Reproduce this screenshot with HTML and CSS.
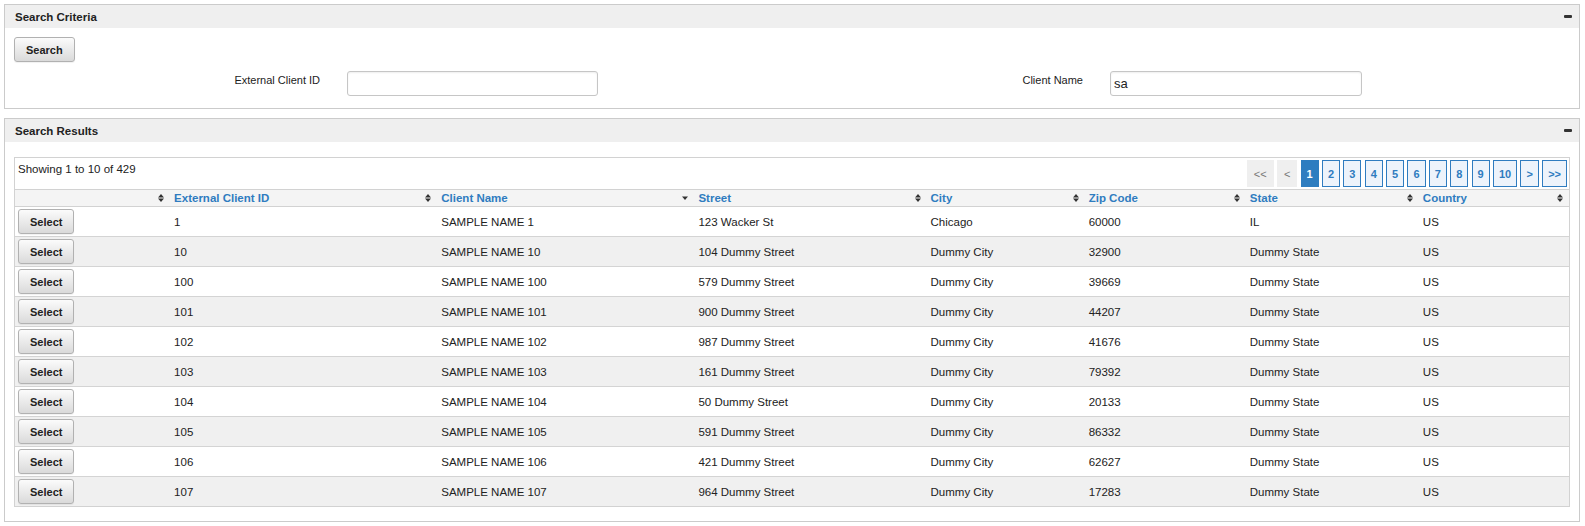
FILE: index.html
```html
<!DOCTYPE html>
<html lang="en">
<head>
<meta charset="utf-8">
<title>Client Search</title>
<link rel="stylesheet" href="styles.css">
</head>
<body>
<section class="panel">
  <header class="panel-head"><span class="panel-title">Search Criteria</span><span class="collapse"></span></header>
  <div class="criteria-body">
    <button class="btn">Search</button>
    <div class="fields">
      <label class="field-label">External Client ID</label>
      <input class="field-input" type="text" value="">
      <label class="field-label">Client Name</label>
      <input class="field-input" type="text" value="sa">
    </div>
  </div>
</section>

<section class="panel panel-results">
  <header class="panel-head"><span class="panel-title">Search Results</span><span class="collapse"></span></header>
  <div class="results-body">
    <div class="grid-box">
      <div class="toolbar">
        <span class="info">Showing 1 to 10 of 429</span>
        <nav class="pager">
          <span class="pg off">&lt;&lt;</span>
          <span class="pg off">&lt;</span>
          <span class="pg on">1</span>
          <span class="pg">2</span>
          <span class="pg">3</span>
          <span class="pg">4</span>
          <span class="pg">5</span>
          <span class="pg">6</span>
          <span class="pg">7</span>
          <span class="pg">8</span>
          <span class="pg">9</span>
          <span class="pg">10</span>
          <span class="pg">&gt;</span>
          <span class="pg">&gt;&gt;</span>
        </nav>
      </div>
      <table class="grid">
        <colgroup>
          <col class="c0"><col class="c1"><col class="c2"><col class="c3"><col class="c4"><col class="c5"><col class="c6"><col class="c7">
        </colgroup>
        <thead>
          <tr>
            <th><span class="th-in"><span></span><svg class="sort" width="6" height="8" viewBox="0 0 6 8"><path d="M0 3.4L3 0L6 3.4Z M0 4.6L3 8L6 4.6Z"/></svg></span></th>
            <th><span class="th-in"><span>External Client ID</span><svg class="sort" width="6" height="8" viewBox="0 0 6 8"><path d="M0 3.4L3 0L6 3.4Z M0 4.6L3 8L6 4.6Z"/></svg></span></th>
            <th><span class="th-in"><span>Client Name</span><svg class="sort" width="6" height="8" viewBox="0 0 6 8"><path d="M0 2.5L3 6L6 2.5Z"/></svg></span></th>
            <th><span class="th-in"><span>Street</span><svg class="sort" width="6" height="8" viewBox="0 0 6 8"><path d="M0 3.4L3 0L6 3.4Z M0 4.6L3 8L6 4.6Z"/></svg></span></th>
            <th><span class="th-in"><span>City</span><svg class="sort" width="6" height="8" viewBox="0 0 6 8"><path d="M0 3.4L3 0L6 3.4Z M0 4.6L3 8L6 4.6Z"/></svg></span></th>
            <th><span class="th-in"><span>Zip Code</span><svg class="sort" width="6" height="8" viewBox="0 0 6 8"><path d="M0 3.4L3 0L6 3.4Z M0 4.6L3 8L6 4.6Z"/></svg></span></th>
            <th><span class="th-in"><span>State</span><svg class="sort" width="6" height="8" viewBox="0 0 6 8"><path d="M0 3.4L3 0L6 3.4Z M0 4.6L3 8L6 4.6Z"/></svg></span></th>
            <th><span class="th-in"><span>Country</span><svg class="sort" width="6" height="8" viewBox="0 0 6 8"><path d="M0 3.4L3 0L6 3.4Z M0 4.6L3 8L6 4.6Z"/></svg></span></th>
          </tr>
        </thead>
        <tbody>
          <tr><td><button class="btn">Select</button></td><td>1</td><td>SAMPLE NAME 1</td><td>123 Wacker St</td><td>Chicago</td><td>60000</td><td>IL</td><td>US</td></tr>
          <tr><td><button class="btn">Select</button></td><td>10</td><td>SAMPLE NAME 10</td><td>104 Dummy Street</td><td>Dummy City</td><td>32900</td><td>Dummy State</td><td>US</td></tr>
          <tr><td><button class="btn">Select</button></td><td>100</td><td>SAMPLE NAME 100</td><td>579 Dummy Street</td><td>Dummy City</td><td>39669</td><td>Dummy State</td><td>US</td></tr>
          <tr><td><button class="btn">Select</button></td><td>101</td><td>SAMPLE NAME 101</td><td>900 Dummy Street</td><td>Dummy City</td><td>44207</td><td>Dummy State</td><td>US</td></tr>
          <tr><td><button class="btn">Select</button></td><td>102</td><td>SAMPLE NAME 102</td><td>987 Dummy Street</td><td>Dummy City</td><td>41676</td><td>Dummy State</td><td>US</td></tr>
          <tr><td><button class="btn">Select</button></td><td>103</td><td>SAMPLE NAME 103</td><td>161 Dummy Street</td><td>Dummy City</td><td>79392</td><td>Dummy State</td><td>US</td></tr>
          <tr><td><button class="btn">Select</button></td><td>104</td><td>SAMPLE NAME 104</td><td>50 Dummy Street</td><td>Dummy City</td><td>20133</td><td>Dummy State</td><td>US</td></tr>
          <tr><td><button class="btn">Select</button></td><td>105</td><td>SAMPLE NAME 105</td><td>591 Dummy Street</td><td>Dummy City</td><td>86332</td><td>Dummy State</td><td>US</td></tr>
          <tr><td><button class="btn">Select</button></td><td>106</td><td>SAMPLE NAME 106</td><td>421 Dummy Street</td><td>Dummy City</td><td>62627</td><td>Dummy State</td><td>US</td></tr>
          <tr><td><button class="btn">Select</button></td><td>107</td><td>SAMPLE NAME 107</td><td>964 Dummy Street</td><td>Dummy City</td><td>17283</td><td>Dummy State</td><td>US</td></tr>
        </tbody>
      </table>
    </div>
  </div>
</section>
</body>
</html>
```

FILE: styles.css
```css
* { box-sizing: border-box; }

body {
  margin: 4px 5px 0 4px;
  font-family: "Liberation Sans", Arial, sans-serif;
  font-size: 11.5px;
  color: #222;
  background: #fff;
}

.panel {
  border: 1px solid #cbcbcb;
  background: #fff;
}
.panel-results { margin-top: 9px; }

.panel-head {
  height: 23px;
  background: #efefef;
  display: flex;
  align-items: center;
  justify-content: space-between;
  padding: 0 7px 0 10px;
}
.panel-title {
  font-weight: bold;
  font-size: 11.5px;
  color: #222;
}
.collapse {
  width: 8px;
  height: 3px;
  background: #333;
  border-radius: 1px;
}

.btn {
  display: block;
  height: 25px;
  padding: 0 11px;
  border: 1px solid #b1b1b1;
  border-radius: 3px;
  background: linear-gradient(#fbfbfb, #dadada);
  box-shadow: 0 1px 1px rgba(0,0,0,0.06);
  font: bold 11px "Liberation Sans", Arial, sans-serif;
  color: #222;
  cursor: pointer;
}

.criteria-body { padding: 9px 9px 12px; }

.fields {
  display: grid;
  grid-template-columns: 333px 251px 512px 252px;
  margin-top: 9px;
}
.field-label {
  text-align: right;
  padding: 3px 27px 0 0;
  font-size: 11px;
  line-height: 13px;
  color: #222;
}
.field-input {
  height: 25px;
  border: 1px solid #c6c6c6;
  border-radius: 3px;
  padding: 0 3px;
  font: 13px "Liberation Sans", Arial, sans-serif;
  color: #222;
  background: #fff;
  box-shadow: inset 0 1px 2px rgba(0,0,0,0.07);
  outline: none;
}

.results-body { padding: 15px 9px 14px; }

.grid-box { border: 1px solid #d2d2d2; }

.toolbar {
  display: flex;
  justify-content: space-between;
  align-items: flex-start;
  height: 31px;
  padding: 2px 2px 2px 3px;
}
.info {
  padding-top: 3px;
  line-height: 13px;
  color: #222;
}
.pager {
  display: flex;
  gap: 3.25px;
}
.pg {
  height: 27px;
  padding: 0 5px;
  display: flex;
  align-items: center;
  border: 1px solid #2f7cc0;
  background: #edf3fb;
  color: #2f7cc0;
  font-weight: bold;
  font-size: 11px;
}
.pg.off {
  border-color: #efefef;
  background: #efefef;
  color: #777;
  font-weight: normal;
  padding: 0 6px;
}
.pg.on {
  background: #2e7dc0;
  border-color: #2e7dc0;
  color: #fff;
}

.grid {
  width: 100%;
  table-layout: fixed;
  border-collapse: separate;
  border-spacing: 0;
}
.c0 { width: 155px; }
.c1 { width: 267px; }
.c2 { width: 257px; }
.c3 { width: 232px; }
.c4 { width: 158px; }
.c5 { width: 161px; }
.c6 { width: 173px; }
.c7 { width: 150px; }

.grid th {
  padding: 0 6px 0 4px;
  line-height: 16px;
  background: #f4f4f4;
  border-top: 1px solid #d2d2d2;
  border-bottom: 1px solid #d2d2d2;
  text-align: left;
  font-weight: bold;
  font-size: 11.5px;
  color: #2f7cc0;
}
.th-in {
  display: flex;
  align-items: center;
  justify-content: space-between;
}
.sort { fill: #333; flex: none; }

.grid td {
  padding: 2px 4px;
  border-bottom: 1px solid #d4d4d4;
  vertical-align: middle;
  white-space: nowrap;
  color: #222;
}
.grid td:first-child { padding-left: 3px; }
.grid tbody tr:nth-child(even) td { background: #f0f0f0; }
.grid tbody tr:last-child td { border-bottom: none; }
```
